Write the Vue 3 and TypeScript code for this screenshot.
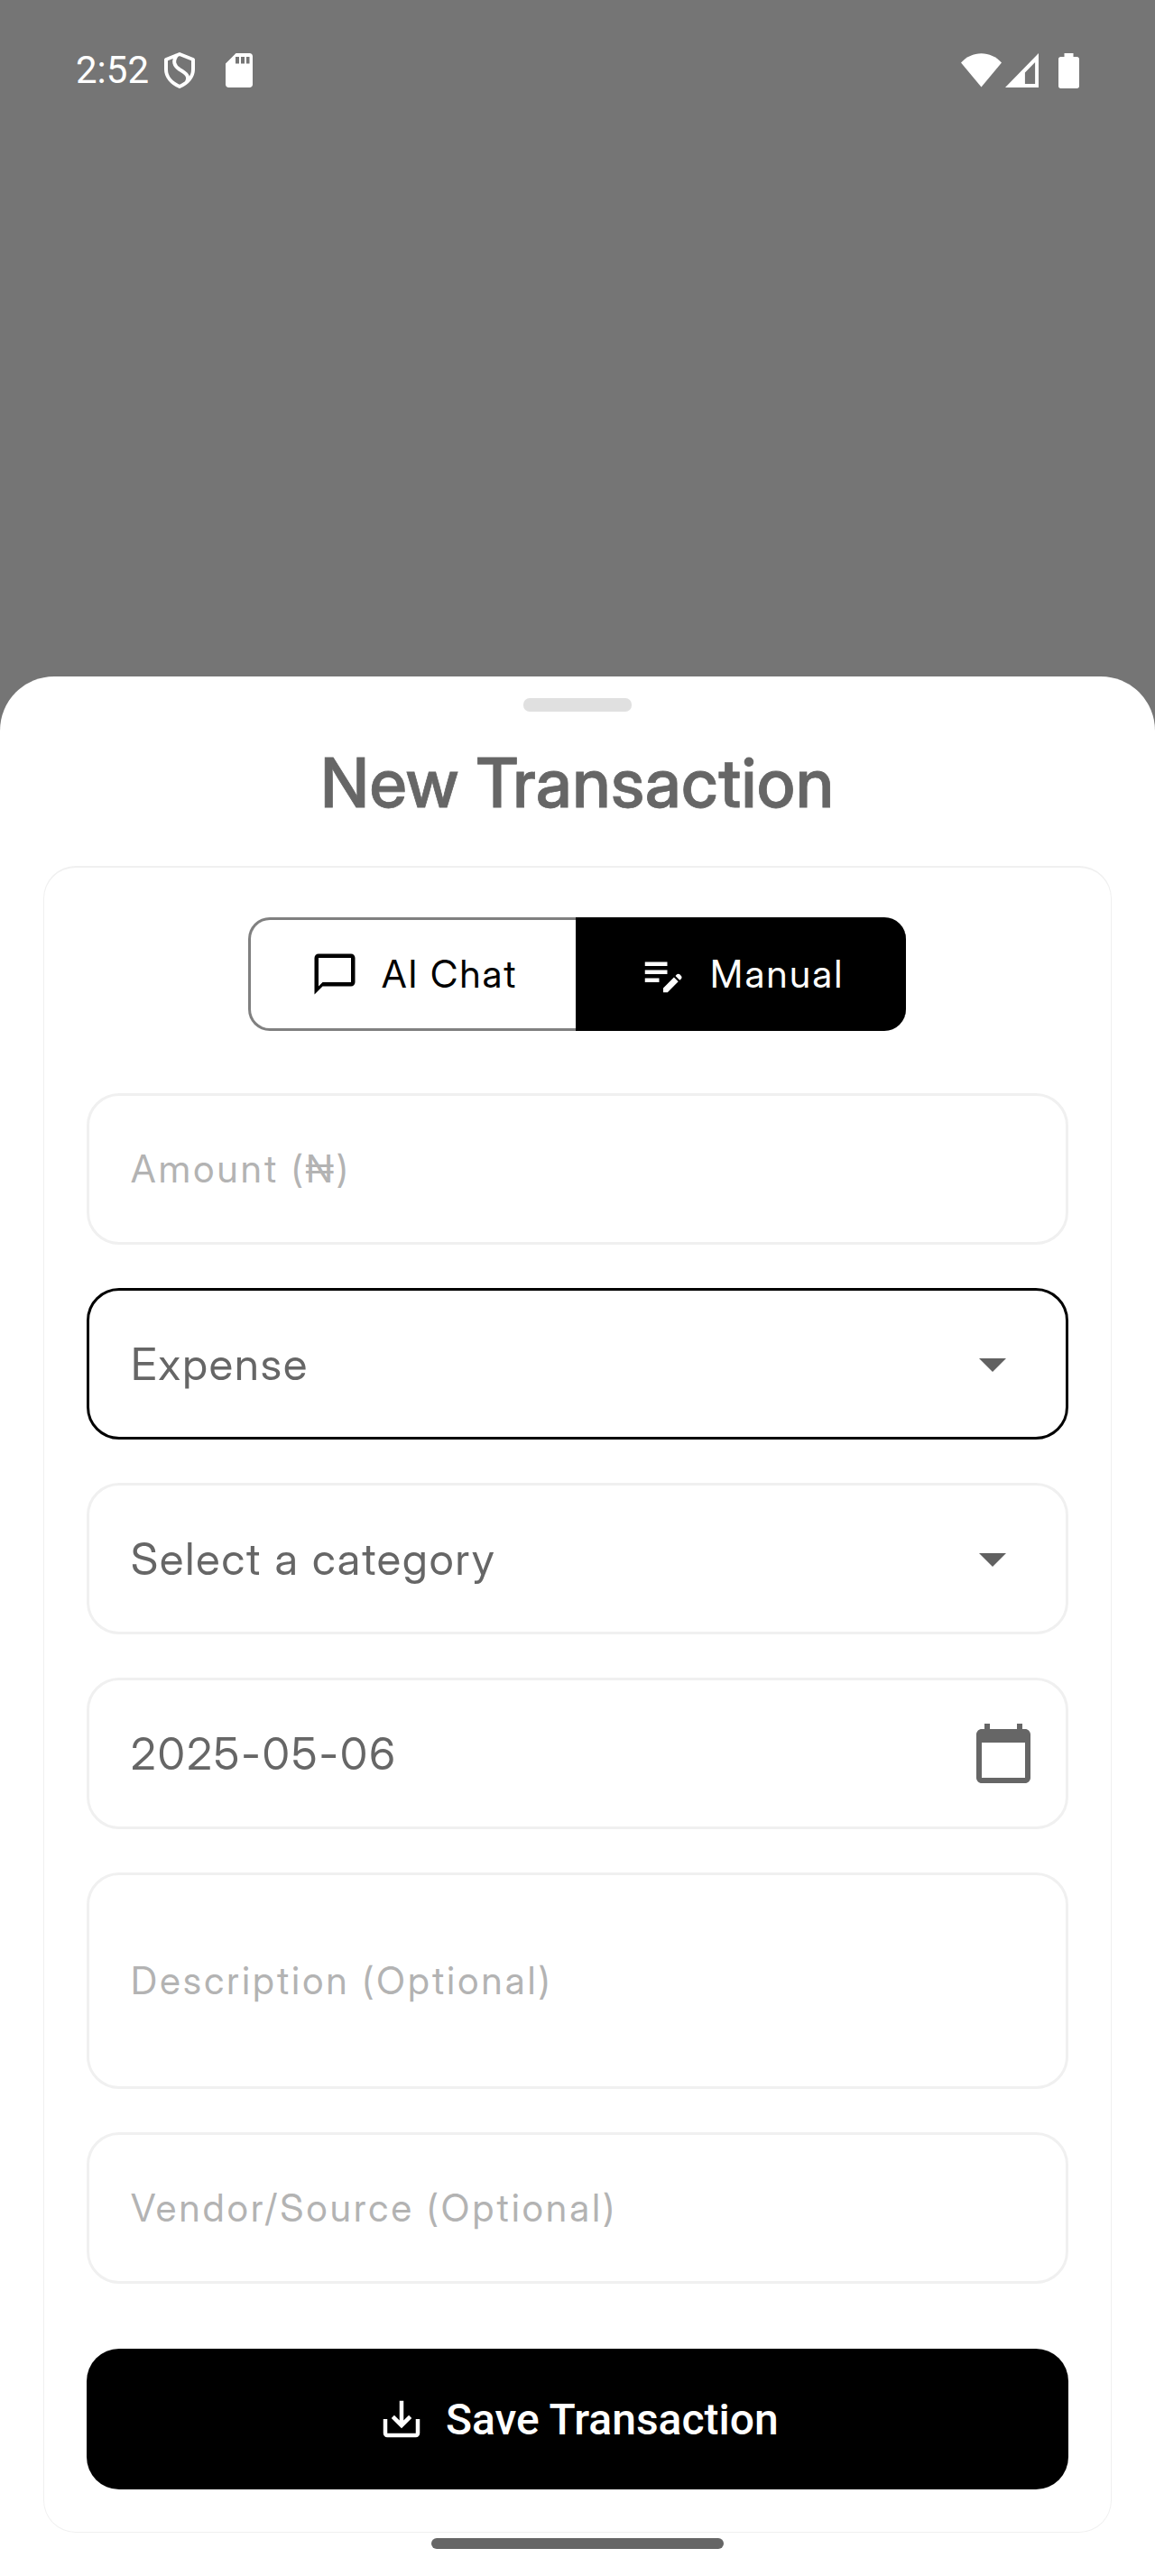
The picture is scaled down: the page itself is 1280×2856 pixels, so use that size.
<script setup lang="ts">
import { ref } from 'vue'

type Mode = 'chat' | 'manual'
type Trailing = 'arrow' | 'calendar' | null

interface Field {
  id: string
  text: string
  kind: 'hint' | 'value' | 'date'
  trailing: Trailing
  tall?: boolean
}

const mode = ref<Mode>('manual')
const focused = ref('type')

const fields: Field[] = [
  { id: 'amount', text: 'Amount (₦)', kind: 'hint', trailing: null },
  { id: 'type', text: 'Expense', kind: 'value', trailing: 'arrow' },
  { id: 'category', text: 'Select a category', kind: 'value', trailing: 'arrow' },
  { id: 'date', text: '2025-05-06', kind: 'date', trailing: 'calendar' },
  { id: 'description', text: 'Description (Optional)', kind: 'hint', trailing: null, tall: true },
  { id: 'vendor', text: 'Vendor/Source (Optional)', kind: 'hint', trailing: null },
]
</script>

<template>
  <div class="screen">
    <header class="status">
      <div class="status-left">
        <span class="clock">2:52</span>
        <svg class="shield" width="36" height="42" viewBox="0 0 36 42" fill="none" stroke="#fff" stroke-width="4" stroke-linejoin="round">
          <path d="M18 3 L33 9 V20 C33 28 27 35 18 39 C9 35 3 28 3 20 V9 Z" />
          <path d="M15 4 C10 11 12 16 18 20 C27 25 29 29 26 34" />
        </svg>
        <svg class="sd" width="30" height="38" viewBox="0 0 30 38">
          <path fill="#fff" fill-rule="evenodd" d="M11.5 0H26.5C28.6 0 30 1.4 30 3.5V34.5C30 36.600 28.600 38 26.500 38H3.500C1.400 38 0 36.600 0 34.500V11.500ZM11 4V11.500H15V4ZM17 4V11.500H21V4ZM23 4V11.500H26.500V4Z" />
        </svg>
      </div>
      <div class="status-right">
        <svg class="wifi" width="45" height="38" viewBox="0 0 45 38">
          <path fill="#fff" d="M22.500 37.500 0 10.500C6 4 14 0.300 22.500 0.300S39 4 45 10.500Z" />
        </svg>
        <svg class="signal" width="37" height="38" viewBox="0 0 38 38" preserveAspectRatio="none">
          <path fill="#fff" fill-rule="evenodd" d="M38 0V38H0ZM34 10 22.500 21.500V34H34Z" />
        </svg>
        <svg class="battery" width="23" height="39" viewBox="0 0 23 39">
          <path fill="#fff" d="M6.500 0H16.500V4H20.500C22 4 23 5 23 6.500V36.500C23 38 22 39 20.500 39H2.500C1 39 0 38 0 36.500V6.500C0 5 1 4 2.500 4H6.500Z" />
        </svg>
      </div>
    </header>

    <main class="sheet">
      <div class="handle"></div>
      <h1 class="title">New Transaction</h1>

      <section class="card">
        <div class="toggle">
          <button class="segment" :class="{ active: mode === 'chat' }" @click="mode = 'chat'">
            <svg width="54" height="54" viewBox="0 0 24 24" fill="currentColor">
              <path d="M20 2H4c-1.100 0-2 .9-2 2v18l4-4h14c1.100 0 2-.9 2-2V4c0-1.100-.9-2-2-2zm0 14H6l-2 2V4h16v12z" />
            </svg>
            <span class="chat-label">AI Chat</span>
          </button>
          <button class="segment" :class="{ active: mode === 'manual' }" @click="mode = 'manual'">
            <svg width="54" height="54" viewBox="0 0 24 24" fill="currentColor">
              <path d="M3 10h11v2H3v-2zm0-2h11V6H3v2zm0 8h7v-2H3v2zm15.010-3.130.710-.710c.390-.390 1.020-.390 1.410 0l.710.710c.390.390.390 1.020 0 1.410l-.710.710-2.120-2.120zm-.710.710-5.300 5.300V21h2.120l5.300-5.300-2.120-2.120z" />
            </svg>
            <span class="manual-label">Manual</span>
          </button>
        </div>

        <div
          v-for="field in fields"
          :key="field.id"
          class="field"
          :class="[field.kind, { tall: field.tall, focused: focused === field.id }]"
          @click="focused = field.id"
        >
          <span>{{ field.text }}</span>
          <svg v-if="field.trailing === 'arrow'" class="arrow" width="72" height="72" viewBox="0 0 24 24" fill="#616161">
            <path d="M7 10l5 5 5-5z" />
          </svg>
          <svg v-if="field.trailing === 'calendar'" class="calendar" width="72" height="72" viewBox="0 0 24 24" fill="#666">
            <path d="M20 3h-1V1h-2v2H7V1H5v2H4c-1.100 0-2 .9-2 2v16c0 1.100.9 2 2 2h16c1.100 0 2-.9 2-2V5c0-1.100-.9-2-2-2zm0 18H4V8h16v13z" />
          </svg>
        </div>

        <button class="save">
          <svg width="54" height="54" viewBox="0 0 24 24" fill="currentColor">
            <path d="M19 12v7H5v-7H3v7c0 1.100.9 2 2 2h14c1.100 0 2-.9 2-2v-7h-2zm-6 .670l2.590-2.580L17 11.500l-5 5-5-5 1.410-1.410L11 12.670V3h2v9.670z" />
          </svg>
          <span>Save Transaction</span>
        </button>
      </section>

      <div class="nav-pill"></div>
    </main>
  </div>
</template>

<style>
body {
  margin: 0;
  background: #757575;
}
</style>

<style scoped>
* {
  box-sizing: border-box;
}
.screen {
  width: 1280px;
  height: 2856px;
  display: flex;
  flex-direction: column;
  overflow: hidden;
  background: #757575;
  font-family: 'Inter Display', Inter, sans-serif;
  font-variation-settings: 'opsz' 32;
}
.status {
  height: 750px;
  flex: none;
  display: flex;
  justify-content: space-between;
  align-items: flex-start;
  padding: 58px 84px 0;
  color: #fff;
}
.status-left,
.status-right {
  display: flex;
  align-items: center;
  height: 40px;
}
.clock {
  width: 97px;
  font: 400 42px/40px Roboto, sans-serif;
  white-space: nowrap;
}
.sd {
  margin-left: 33px;
}
.signal {
  margin-left: 4px;
}
.battery {
  margin-left: 22px;
}
svg {
  flex: none;
  display: block;
}
.sheet {
  flex: 1;
  display: flex;
  flex-direction: column;
  align-items: center;
  padding-top: 24px;
  background: #fff;
  border-radius: 60px 60px 0 0;
}
.handle {
  width: 120px;
  height: 15px;
  border-radius: 7px;
  background: #e0e0e0;
}
.title {
  margin: 29px 0 0;
  height: 100px;
  font-size: 75px;
  line-height: 100px;
  font-weight: 500;
  letter-spacing: 0.85px;
  -webkit-text-stroke: 0.8px #666;
  color: #666;
  white-space: nowrap;
}
.card {
  width: 1184px;
  height: 1848px;
  margin-top: 42px;
  padding: 55px 47px 0;
  display: flex;
  flex-direction: column;
  align-items: center;
  border: 1px solid #f0f0f0;
  border-top-width: 2px;
  border-radius: 36px;
}
.toggle {
  display: flex;
  width: 730px;
  height: 126px;
  margin-bottom: 21px;
}
.segment {
  flex: none;
  display: flex;
  align-items: center;
  width: 363px;
  padding: 0 0 0 66px;
  border: 3px solid #808080;
  border-right: 0;
  border-radius: 24px 0 0 24px;
  background: #fff;
  color: #000;
  font: 400 42px/52px 'Inter Display', Inter, sans-serif;
}
.segment + .segment {
  width: 366px;
  padding-left: 67px;
  border-radius: 0 24px 24px 0;
}
.segment.active {
  border-color: #000;
  background: #000;
  color: #fff;
}
.segment span {
  margin-left: 25px;
  letter-spacing: 2.1px;
  white-space: nowrap;
}
.segment .manual-label {
  letter-spacing: 2.4px;
}
.field {
  width: 1088px;
  height: 168px;
  flex: none;
  margin-top: 48px;
  padding: 0 33px 0 46px;
  display: flex;
  align-items: center;
  justify-content: space-between;
  border: 3px solid #f0f0f0;
  border-radius: 36px;
  font-size: 49px;
  letter-spacing: 1.95px;
  color: #666;
  white-space: nowrap;
}
.field.date {
  letter-spacing: 2.3px;
}
.field.hint {
  padding-bottom: 1px;
  font-size: 42px;
  color: #b3b3b3;
  letter-spacing: 3.25px;
}
.field.tall {
  height: 240px;
}
.field.focused {
  border-color: #000;
}
.arrow {
  margin-right: 12px;
}
.save {
  display: flex;
  align-items: center;
  justify-content: flex-start;
  width: 1088px;
  height: 156px;
  flex: none;
  margin-top: 72px;
  padding: 0 0 0 322px;
  border: 0;
  border-radius: 36px;
  background: #000;
  color: #fff;
  font: 500 48px/56px Roboto, sans-serif;
}
.save span {
  margin-left: 22px;
  padding-top: 2px;
  white-space: nowrap;
}
.nav-pill {
  width: 324px;
  height: 12px;
  margin-top: 6px;
  border-radius: 6px;
  background: #666;
}
</style>
